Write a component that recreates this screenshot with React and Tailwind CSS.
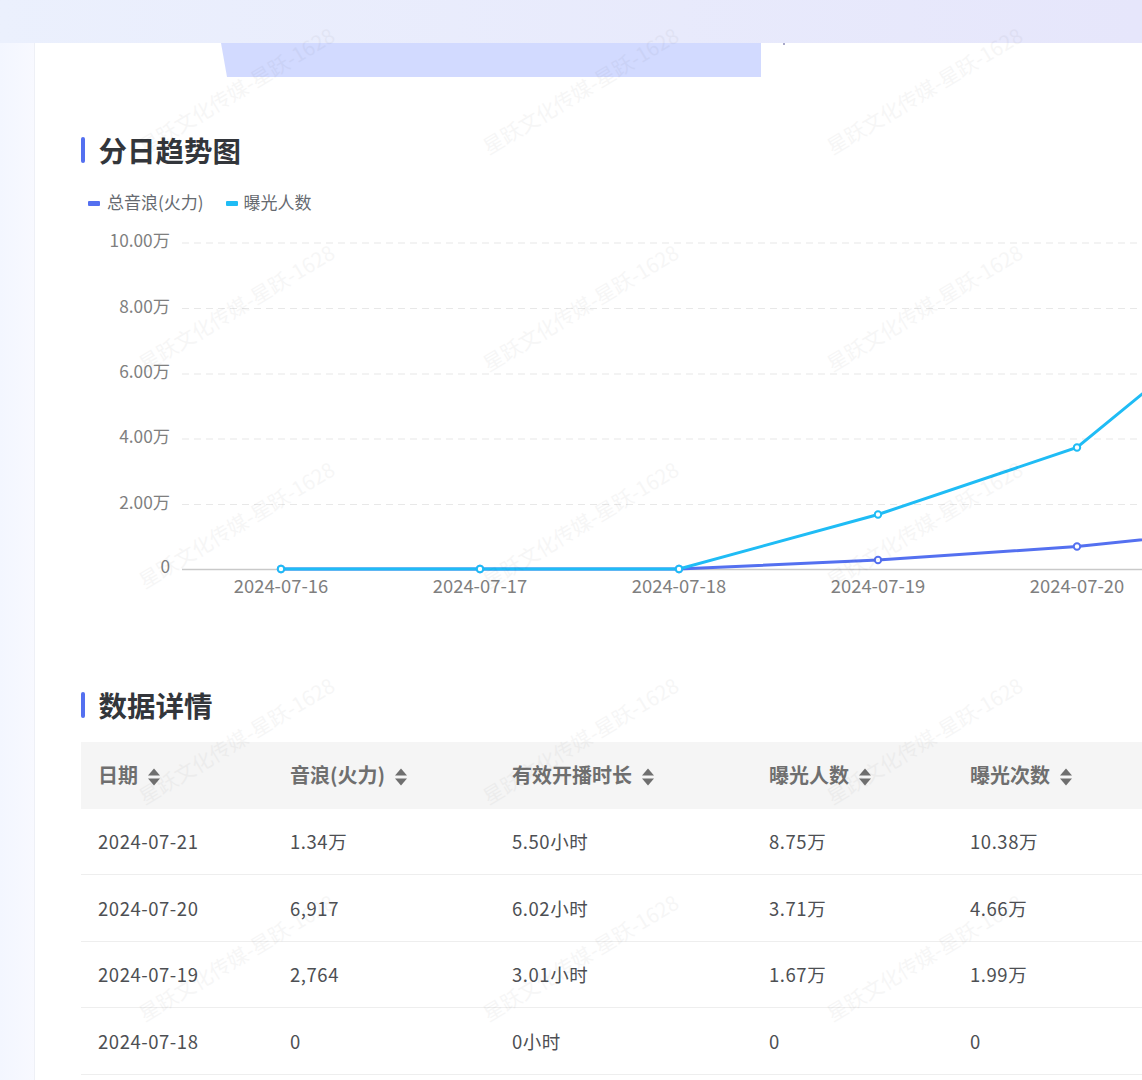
const F = { fontFamily: '"Noto Sans CJK SC", "Noto Sans", sans-serif' };
const BLUE = '#5470f0';
const CYAN = '#1fbcf5';
const xs = [281, 480, 679, 878, 1077, 1276];
const grid = [
  [243, '10.00万'],
  [308.5, '8.00万'],
  [374, '6.00万'],
  [439, '4.00万'],
  [504.5, '2.00万'],
];
const dates = ['2024-07-16', '2024-07-17', '2024-07-18', '2024-07-19', '2024-07-20'];
const blueY = [569, 569, 569, 560, 546.5, 526];
const cyanY = [569, 569, 569, 514.5, 447.5, 284];
const OFF = 228; // chart svg top in page coordinates

function Chart() {
  const pts = (ys) => xs.map((x, i) => `${x},${ys[i] - OFF}`).join(' ');
  const dots = (ys, c) =>
    xs.slice(0, 5).map((x, i) => (
      <circle key={x} cx={x} cy={ys[i] - OFF} r="3.2" fill="#fff" stroke={c} strokeWidth="2" />
    ));
  return (
    <svg width="1142" height="380" className="block -ml-[81px]" style={F}>
      {grid.map(([y, l]) => (
        <g key={l}>
          <line x1="182" x2="1142" y1={y - OFF} y2={y - OFF} stroke="#e8e8e8" strokeWidth="1.2" strokeDasharray="7 5" />
          <text x="170" y={y - OFF + 4} textAnchor="end" fontSize="17.3" fill="#7f7f7f">{l}</text>
        </g>
      ))}
      <text x="170" y={573 - OFF} textAnchor="end" fontSize="17.3" fill="#7f7f7f">0</text>
      <line x1="182" x2="1142" y1={569.5 - OFF} y2={569.5 - OFF} stroke="#c9c9c9" strokeWidth="1.3" />
      {dates.map((d, i) => (
        <text key={d} x={xs[i]} y={593 - OFF} textAnchor="middle" fontSize="18.4" fill="#7f7f7f">{d}</text>
      ))}
      <polyline points={pts(blueY)} fill="none" stroke={BLUE} strokeWidth="3" />
      <polyline points={pts(cyanY)} fill="none" stroke={CYAN} strokeWidth="3" />
      {dots(blueY, BLUE)}
      {dots(cyanY, CYAN)}
    </svg>
  );
}

function SortIcon() {
  return (
    <svg width="12" height="18" viewBox="0 0 12 18" className="shrink-0 ml-[10px] mt-[4px]">
      <path d="M6 0.5 L12 7.5 H0 Z" fill="#6f6f6f" />
      <path d="M0 10.5 H12 L6 17.5 Z" fill="#6f6f6f" />
    </svg>
  );
}

function Title({ children }) {
  return (
    <div className="flex items-center h-[28px]">
      <div className="w-[4px] h-[26px] rounded-[2px] bg-[#5470f0]" />
      <h2 className="ml-[13.5px] text-[28.5px] leading-[28px] font-bold text-[#33363b]">{children}</h2>
    </div>
  );
}

const cols = [
  ['w-[192px]', '日期'],
  ['w-[222px]', '音浪(火力)'],
  ['w-[257px]', '有效开播时长'],
  ['w-[201px]', '曝光人数'],
  ['w-[200px]', '曝光次数'],
];
const rows = [
  ['2024-07-21', '1.34万', '5.50小时', '8.75万', '10.38万'],
  ['2024-07-20', '6,917', '6.02小时', '3.71万', '4.66万'],
  ['2024-07-19', '2,764', '3.01小时', '1.67万', '1.99万'],
  ['2024-07-18', '0', '0小时', '0', '0'],
];

function Watermarks() {
  const marks = [];
  [90, 307, 524, 740, 957].forEach((y) =>
    [236, 580, 924].forEach((x) =>
      marks.push(
        <div
          key={`${x}-${y}`}
          className="absolute w-[280px] h-[24px] text-center text-[20.5px] leading-[24px] whitespace-nowrap text-[#000000] opacity-[0.03] rotate-[-31deg]"
          style={{ left: x - 140, top: y - 12 }}
        >
          星跃文化传媒-星跃-1628
        </div>
      )
    )
  );
  return <div className="absolute inset-0 pointer-events-none overflow-hidden">{marks}</div>;
}

export default function App() {
  return (
    <div className="relative w-[1142px] h-[1080px] overflow-hidden flex flex-col bg-white" style={F}>
      <header className="h-[43px] shrink-0 bg-gradient-to-r from-[#ebf0fd] to-[#e6e6fb]" />
      <div className="flex flex-1 min-h-0">
        <aside className="w-[34px] shrink-0 bg-gradient-to-r from-[#f3f6ff] to-[#f8f9ff]" />
        <main className="flex-1 min-w-0 bg-white border-l border-[#eef0f6] pl-[46px]">
          <div className="flex h-[34px]">
            <div className="h-[34px] w-[540px] ml-[140px] bg-[#d2daff] [clip-path:polygon(0_0,100%_0,100%_100%,6px_100%)]" />
            <div className="ml-[22px] w-[2px] h-[2px] bg-[#a9a9c9]" />
          </div>
          <div className="mt-[59px]"><Title>分日趋势图</Title></div>
          <div className="flex items-center mt-[26px] pl-[7px] h-[24px] text-[17px] text-[#666a70]">
            <span className="w-[12px] h-[5px] mt-[2px] rounded-[1px] bg-[#5470f0]" />
            <span className="ml-[7px]">总音浪(火力)</span>
            <span className="ml-[22px] w-[12px] h-[5px] mt-[2px] rounded-[1px] bg-[#1fbcf5]" />
            <span className="ml-[6px]">曝光人数</span>
          </div>
          <div className="mt-[13.5px] h-[463.5px]"><Chart /></div>
          <div><Title>数据详情</Title></div>
          <div className="mt-[23px] w-[1100px]">
            <div className="flex h-[66.5px] bg-[#f5f5f5] pl-[17px] items-center">
              {cols.map(([w, t]) => (
                <div key={t} className={`${w} flex items-center text-[20px] font-bold text-[#6f6f6f]`}>
                  <span>{t}</span>
                  <SortIcon />
                </div>
              ))}
            </div>
            {rows.map((r) => (
              <div key={r[0]} className="flex h-[66.5px] items-center pt-[2px] pl-[17px] border-b border-[#eeeeee] text-[18.5px] tracking-[0.55px] text-[#4d4f53]">
                {r.map((v, i) => (
                  <div key={i} className={cols[i][0]}>{v}</div>
                ))}
              </div>
            ))}
          </div>
        </main>
      </div>
      <Watermarks />
    </div>
  );
}
